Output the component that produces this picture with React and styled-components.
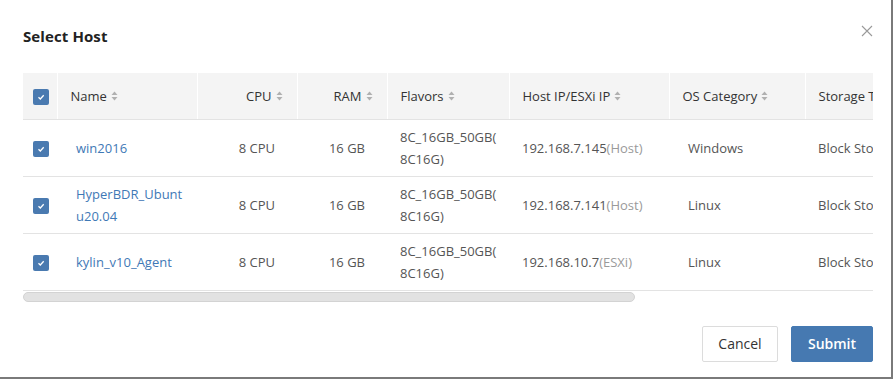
import React from 'react';
import styled, { createGlobalStyle } from 'styled-components';

const GlobalStyle = createGlobalStyle`
  html, body {
    margin: 0;
    padding: 0;
    background: #fff;
  }
  body {
    font-family: "Open Sans", "Noto Sans", Arial, sans-serif;
  }
`;

const Frame = styled.div`
  width: 893px;
  height: 379px;
  box-sizing: border-box;
  border-right: 2px solid #7a7a7a;
  border-bottom: 2px solid #7a7a7a;
  background: #fff;
  overflow: hidden;
`;

const Modal = styled.div`
  display: flex;
  flex-direction: column;
  padding: 0 18px 0 23px;
`;

const Header = styled.div`
  position: relative;
  display: flex;
  align-items: center;
  height: 73px;
  padding-bottom: 2px;
  box-sizing: border-box;
`;

const Title = styled.h3`
  margin: 0;
  font-size: 15px;
  font-weight: 700;
  color: #222;
  letter-spacing: 0.1px;
`;

const CloseButton = styled.button`
  position: absolute;
  top: 25px;
  right: 0;
  width: 12px;
  height: 12px;
  padding: 0;
  border: 0;
  background: none;
  cursor: pointer;
`;

const TableScroll = styled.div`
  width: 850px;
  overflow: hidden;
`;

const ScrollTrack = styled.div`
  width: 850px;
  height: 10px;
  margin-top: 1px;
`;

const ScrollThumb = styled.div`
  height: 8px;
  border-radius: 5px;
  background: #e2e2e2;
  border: 1px solid #d3d3d3;
`;

const Table = styled.table`
  width: 1184px;
  border-collapse: collapse;
  table-layout: fixed;
  font-size: 13px;
`;

const HeadCell = styled.th`
  height: 46px;
  padding: 0 ${p => (p.$right ? '14px' : '0')} 0 ${p => p.$pl || 13}px;
  background: #f4f4f4;
  border-bottom: 1px solid #e3e3e3;
  border-left: ${p => (p.$first ? 'none' : '1px solid #fff')};
  text-align: ${p => (p.$right ? 'right' : 'left')};
  font-weight: 400;
  color: #333;
  white-space: nowrap;
  box-sizing: border-box;
`;

const Cell = styled.td`
  height: 57px;
  padding: 0 ${p => (p.$right ? '22px' : '8px')} 0 ${p => p.$pl || 13}px;
  border-bottom: 1px solid #e3e3e3;
  text-align: ${p => (p.$right ? 'right' : 'left')};
  color: #555;
  line-height: 22px;
  box-sizing: border-box;
  vertical-align: middle;
  white-space: ${p => (p.$nowrap ? 'nowrap' : 'normal')};
`;

const HostName = styled.a`
  color: #3f79b6;
  text-decoration: none;
  cursor: pointer;
`;

const IpTag = styled.span`
  color: #9a9a9a;
`;

const Label = styled.span`
  display: inline-flex;
  align-items: center;
  gap: 4px;
`;

const Check = styled.span`
  display: inline-flex;
  align-items: center;
  justify-content: center;
  width: 16px;
  height: 16px;
  border-radius: 2px;
  background: #4a7ab0;
  vertical-align: middle;
`;

const Footer = styled.div`
  display: flex;
  justify-content: flex-end;
  gap: 13px;
  padding-top: 24px;
`;

const Button = styled.button`
  box-sizing: border-box;
  height: 36px;
  width: ${p => (p.$primary ? '82px' : '76px')};
  padding: 0;
  border-radius: 2px;
  border: 1px solid ${p => (p.$primary ? '#4479b2' : '#dcdcdc')};
  background: ${p => (p.$primary ? '#4679b1' : '#fff')};
  color: ${p => (p.$primary ? '#fff' : '#333')};
  font-family: "Open Sans", "Noto Sans", Arial, sans-serif;
  font-size: 14px;
  font-weight: ${p => (p.$primary ? 600 : 400)};
  cursor: pointer;
`;

const SortIcon = () => (
  <svg width="7" height="10" viewBox="0 0 7 10">
    <path d="M3.5 0.5 L6.5 4 H0.5 Z" fill="#b0b0b0" />
    <path d="M3.5 9.5 L6.5 6 H0.5 Z" fill="#b0b0b0" />
  </svg>
);

const CheckBox = () => (
  <Check>
    <svg width="10" height="10" viewBox="0 0 10 10">
      <path d="M2.5 5.2 L4.3 7 L7.7 3.3" stroke="#fff" strokeWidth="1.3" fill="none" />
    </svg>
  </Check>
);

const columns = [
  { key: 'check', width: 34, first: true, pl: 10 },
  { key: 'name', label: 'Name', width: 140 },
  { key: 'cpu', label: 'CPU', width: 100, right: true },
  { key: 'ram', label: 'RAM', width: 90, right: true },
  { key: 'flavor', label: 'Flavors', width: 122 },
  { key: 'ip', label: 'Host IP/ESXi IP', width: 160 },
  { key: 'os', label: 'OS Category', width: 136 },
  { key: 'storage', label: 'Storage Type', width: 150 },
  { key: 'extra', label: 'Status', width: 252 },
];

const hosts = [
  { name: ['win2016'], ip: '192.168.7.145', kind: 'Host', os: 'Windows' },
  { name: ['HyperBDR_Ubunt', 'u20.04'], ip: '192.168.7.141', kind: 'Host', os: 'Linux' },
  { name: ['kylin_v10_Agent'], ip: '192.168.10.7', kind: 'ESXi', os: 'Linux' },
];

const VIEW_WIDTH = 850;
const TABLE_WIDTH = columns.reduce((sum, c) => sum + c.width, 0);

export default function App() {
  const thumbWidth = Math.round((VIEW_WIDTH * VIEW_WIDTH) / TABLE_WIDTH);

  return (
    <Frame>
      <GlobalStyle />
      <Modal>
        <Header>
          <Title>Select Host</Title>
          <CloseButton aria-label="close">
            <svg width="12" height="12" viewBox="0 0 12 12">
              <path d="M1 1 L11 11 M11 1 L1 11" stroke="#9a9a9a" strokeWidth="1.1" />
            </svg>
          </CloseButton>
        </Header>
        <TableScroll>
          <Table style={{ width: TABLE_WIDTH }}>
            <colgroup>
              {columns.map(c => (
                <col key={c.key} style={{ width: c.width }} />
              ))}
            </colgroup>
            <thead>
              <tr>
                {columns.map(c => (
                  <HeadCell key={c.key} $first={c.first} $right={c.right} $pl={c.pl}>
                    {c.key === 'check' ? (
                      <CheckBox />
                    ) : (
                      <Label>
                        {c.label}
                        {c.key !== 'extra' && c.key !== 'storage' && <SortIcon />}
                      </Label>
                    )}
                  </HeadCell>
                ))}
              </tr>
            </thead>
            <tbody>
              {hosts.map(h => (
                <tr key={h.ip}>
                  <Cell $pl={10}>
                    <CheckBox />
                  </Cell>
                  <Cell $pl={19}>
                    <HostName>
                      {h.name[0]}
                      {h.name[1] && <wbr />}
                      {h.name[1]}
                    </HostName>
                  </Cell>
                  <Cell $right>8 CPU</Cell>
                  <Cell $right>16 GB</Cell>
                  <Cell>
                    8C_16GB_50GB(<wbr />8C16G)
                  </Cell>
                  <Cell $nowrap>
                    {h.ip}
                    <IpTag>({h.kind})</IpTag>
                  </Cell>
                  <Cell $pl={19}>{h.os}</Cell>
                  <Cell $nowrap>Block Storage</Cell>
                  <Cell>Available</Cell>
                </tr>
              ))}
            </tbody>
          </Table>
        </TableScroll>
        <ScrollTrack>
          <ScrollThumb style={{ width: thumbWidth }} />
        </ScrollTrack>
        <Footer>
          <Button>Cancel</Button>
          <Button $primary>Submit</Button>
        </Footer>
      </Modal>
    </Frame>
  );
}
